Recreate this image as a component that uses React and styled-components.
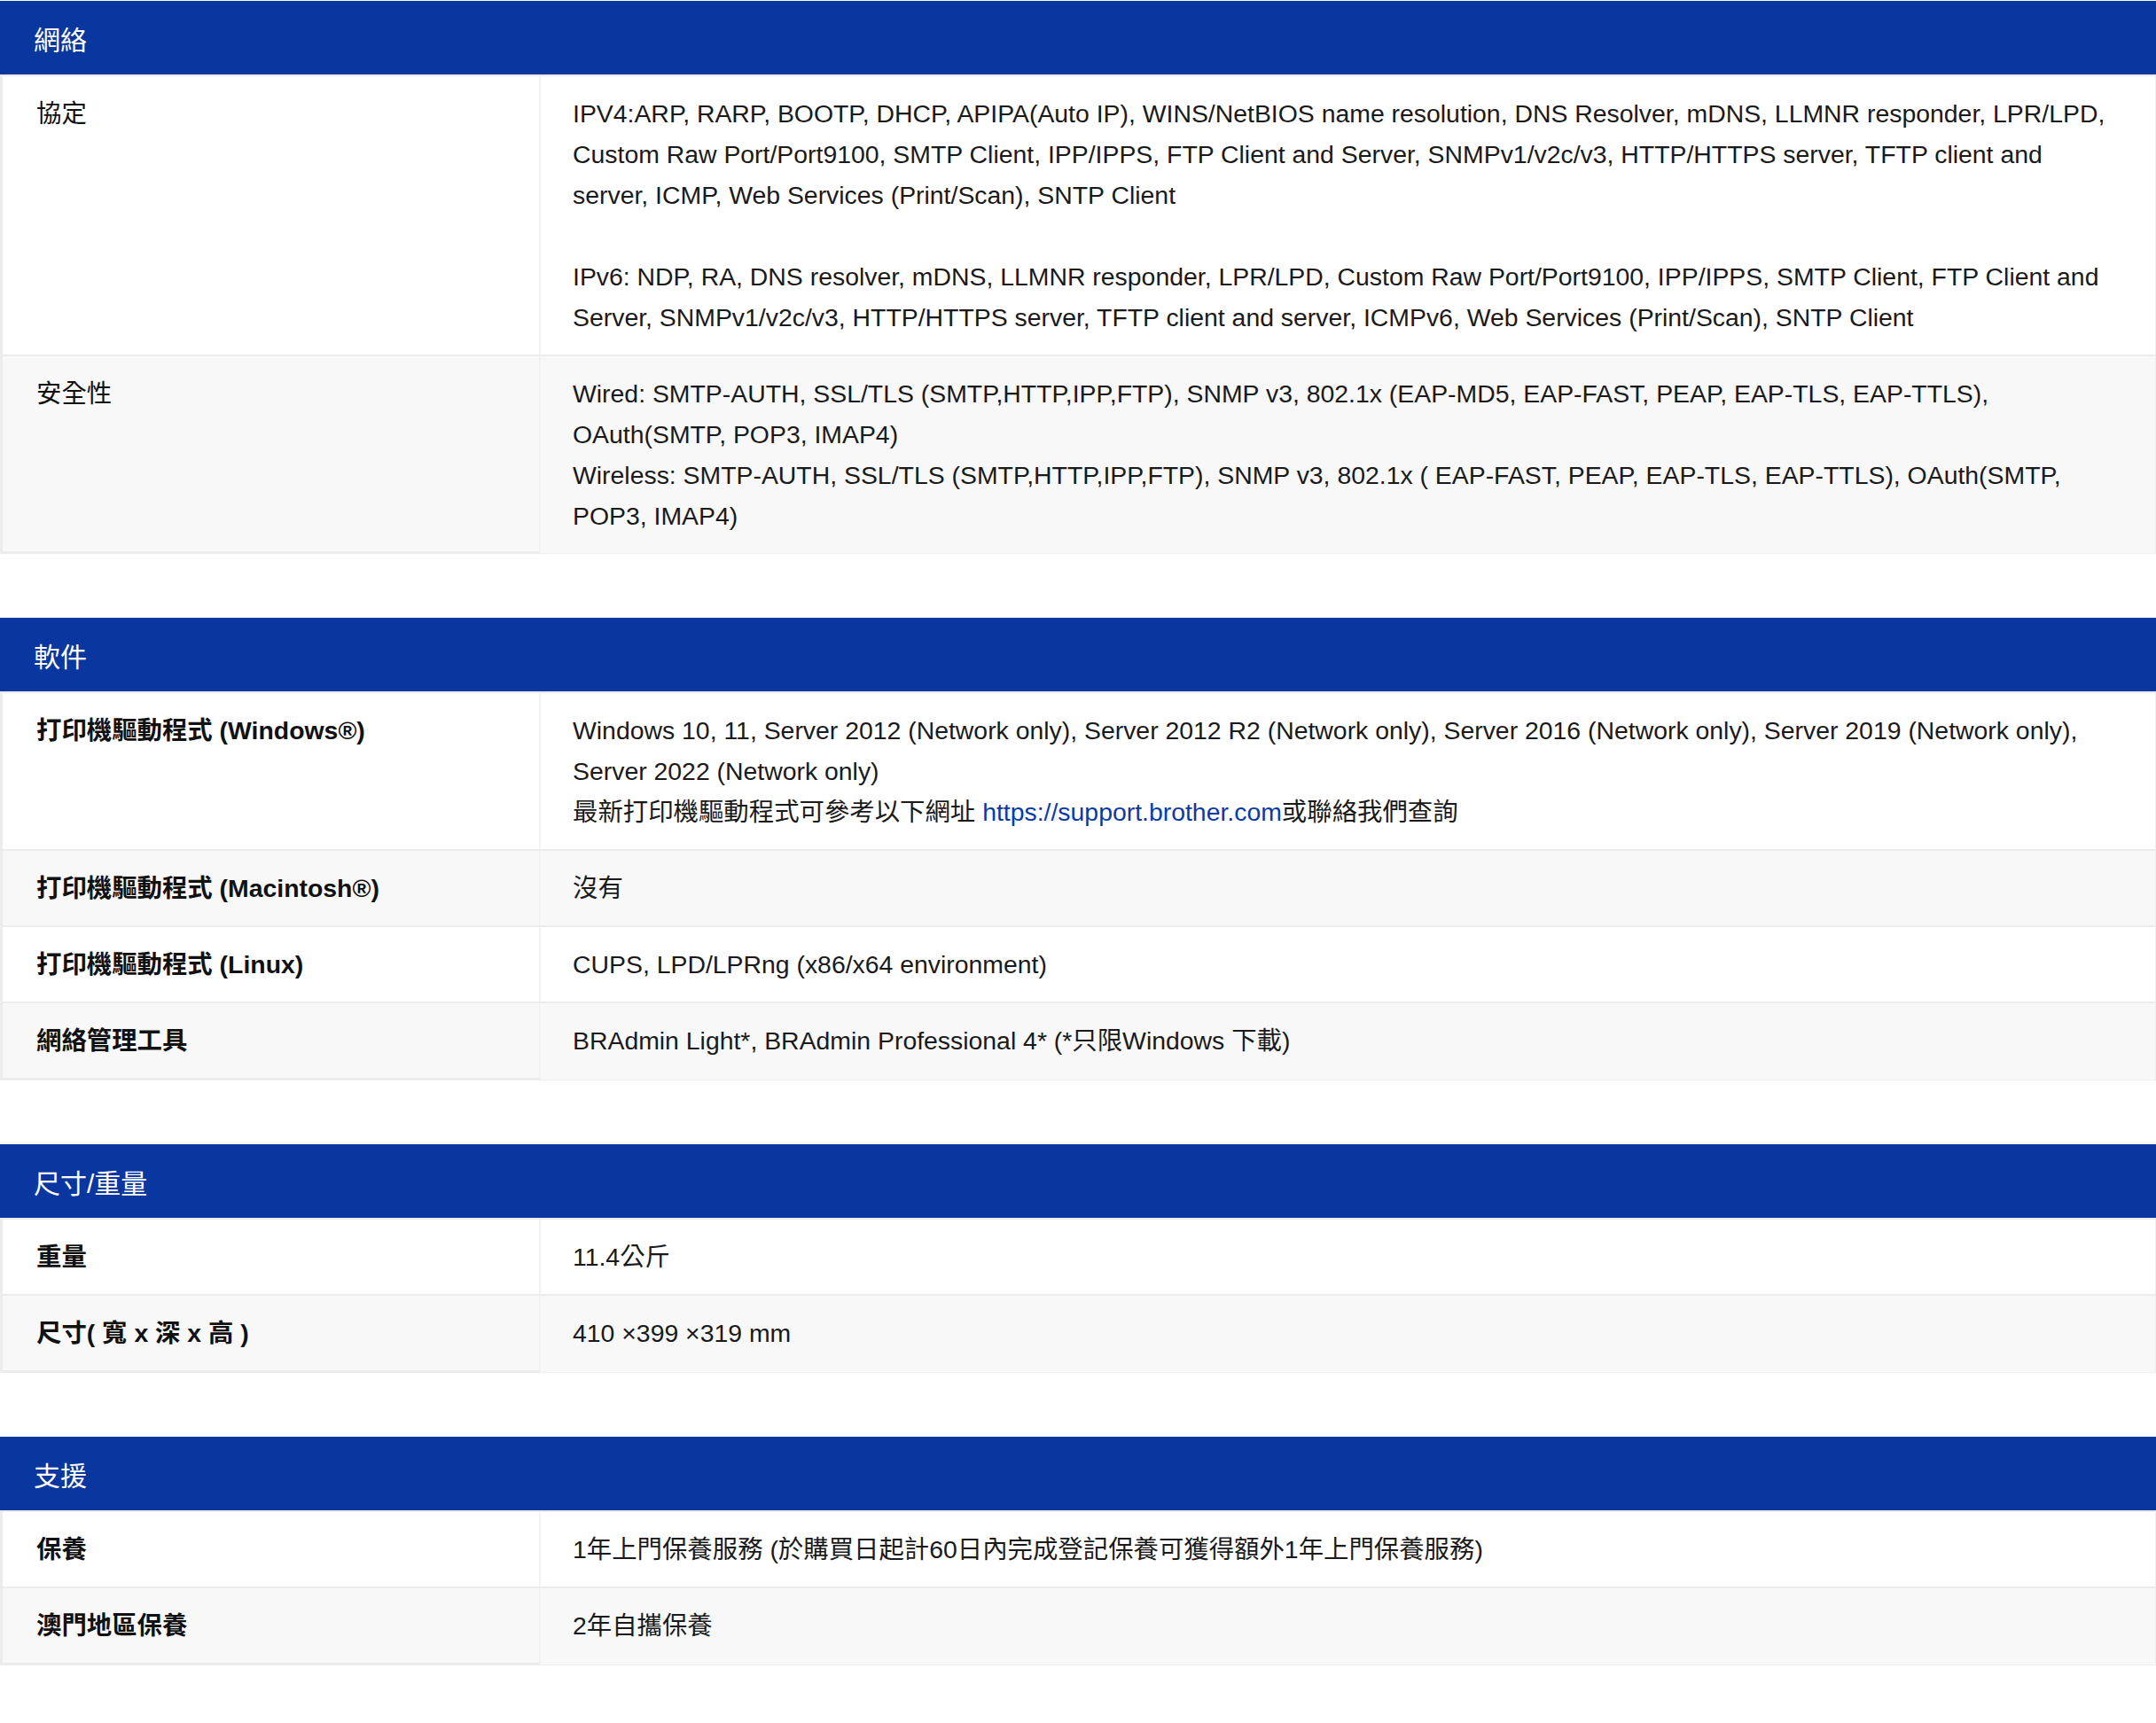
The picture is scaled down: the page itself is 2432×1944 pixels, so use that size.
import React from 'react';
import styled, { createGlobalStyle } from 'styled-components';

const GlobalStyle = createGlobalStyle`
  html, body {
    margin: 0;
    padding: 0;
    background: #ffffff;
  }
  body {
    font-family: 'Liberation Sans', 'Noto Sans CJK TC', sans-serif;
    color: #1d1d1d;
  }
`;

const Page = styled.div`
  padding-top: 1px;
  width: 2432px;
`;

const Section = styled.section`
  margin-bottom: 72px;
`;

const SectionHeader = styled.h2`
  margin: 0;
  height: 83px;
  padding: 0 38px;
  display: flex;
  align-items: center;
  background-color: #0a369f;
  color: #ffffff;
  font-size: 30px;
  font-weight: 400;
  border-bottom: 2px solid #ececec;
`;

const Row = styled.div`
  display: grid;
  grid-template-columns: 610px 1fr;
  background-color: ${(p) => (p.$shaded ? '#f8f8f8' : '#ffffff')};
  & + & {
    border-top: 2px solid #ececec;
  }
  &:last-child > div:first-child {
    border-bottom: 3px solid #ececec;
  }
  &:last-child > div:last-child {
    border-bottom: 1px solid #efefef;
  }
`;

const Label = styled.div`
  box-sizing: border-box;
  padding: 19px 30px 19px 38px;
  border-left: 3px solid #ececec;
  border-right: 2px solid #f2f2f2;
  font-size: 28.4px;
  line-height: 46px;
  font-weight: ${(p) => (p.$plain ? 400 : 700)};
  color: #111111;
`;

const Value = styled.div`
  box-sizing: border-box;
  padding: 19px 43px 19px 36px;
  border-right: 1px solid #f0f0f0;
  font-size: 28.4px;
  line-height: 46px;
  color: #1a1a1a;
`;

const Link = styled.a`
  color: #0b3aa6;
  text-decoration: none;
`;

const sections = [
  {
    title: '網絡',
    plain: true,
    rows: [
      {
        label: '協定',
        value: (
          <>
            IPV4:ARP, RARP, BOOTP, DHCP, APIPA(Auto IP), WINS/NetBIOS name resolution, DNS Resolver, mDNS, LLMNR responder, LPR/LPD, Custom Raw Port/Port9100, SMTP Client, IPP/IPPS, FTP Client and Server, SNMPv1/v2c/v3, HTTP/HTTPS server, TFTP client and server, ICMP, Web Services (Print/Scan), SNTP Client
            <br />
            <br />
            IPv6: NDP, RA, DNS resolver, mDNS, LLMNR responder, LPR/LPD, Custom Raw Port/Port9100, IPP/IPPS, SMTP Client, FTP Client and Server, SNMPv1/v2c/v3, HTTP/HTTPS server, TFTP client and server, ICMPv6, Web Services (Print/Scan), SNTP Client
          </>
        ),
      },
      {
        label: '安全性',
        value: (
          <>
            Wired: SMTP-AUTH, SSL/TLS (SMTP,HTTP,IPP,FTP), SNMP v3, 802.1x (EAP-MD5, EAP-FAST, PEAP, EAP-TLS, EAP-TTLS), OAuth(SMTP, POP3, IMAP4)
            <br />
            Wireless: SMTP-AUTH, SSL/TLS (SMTP,HTTP,IPP,FTP), SNMP v3, 802.1x ( EAP-FAST, PEAP, EAP-TLS, EAP-TTLS), OAuth(SMTP, POP3, IMAP4)
          </>
        ),
      },
    ],
  },
  {
    title: '軟件',
    rows: [
      {
        label: '打印機驅動程式 (Windows®)',
        value: (
          <>
            Windows 10, 11, Server 2012 (Network only), Server 2012 R2 (Network only), Server 2016 (Network only), Server 2019 (Network only), Server 2022 (Network only)
            <br />
            最新打印機驅動程式可參考以下網址 <Link href="#">https://support.brother.com</Link>或聯絡我們查詢
          </>
        ),
      },
      { label: '打印機驅動程式 (Macintosh®)', value: '沒有' },
      { label: '打印機驅動程式 (Linux)', value: 'CUPS, LPD/LPRng (x86/x64 environment)' },
      { label: '網絡管理工具', value: 'BRAdmin Light*, BRAdmin Professional 4* (*只限Windows 下載)' },
    ],
  },
  {
    title: '尺寸/重量',
    rows: [
      { label: '重量', value: '11.4公斤' },
      { label: '尺寸( 寬 x 深 x 高 )', value: '410 ×399 ×319 mm' },
    ],
  },
  {
    title: '支援',
    rows: [
      { label: '保養', value: '1年上門保養服務 (於購買日起計60日內完成登記保養可獲得額外1年上門保養服務)' },
      { label: '澳門地區保養', value: '2年自攜保養' },
    ],
  },
];

const App = () => {
  return (
    <Page>
      <GlobalStyle />
      {sections.map((section) => (
        <Section key={section.title}>
          <SectionHeader>{section.title}</SectionHeader>
          {section.rows.map((row, i) => (
            <Row key={row.label} $shaded={i % 2 === 1}>
              <Label $plain={section.plain}>{row.label}</Label>
              <Value>{row.value}</Value>
            </Row>
          ))}
        </Section>
      ))}
    </Page>
  );
};

export default App;
